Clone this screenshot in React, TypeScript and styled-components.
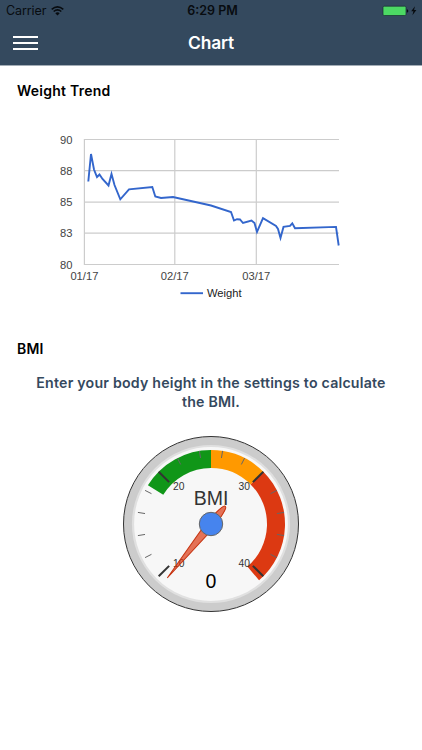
import React from "react";
import styled, { createGlobalStyle } from "styled-components";

const GlobalStyle = createGlobalStyle`
  * { box-sizing: border-box; }
  body { margin: 0; background: #fff; font-family: Inter, "Liberation Sans", sans-serif; }
`;

const Screen = styled.main`
  width: 422px;
  height: 750px;
  background: #fff;
  overflow: hidden;
`;

const Header = styled.header`
  height: 66px;
  background: #34495e;
  border-bottom: 1px solid #a3adb6;
`;

const StatusBar = styled.div`
  display: grid;
  grid-template-columns: 1fr auto 1fr;
  align-items: center;
  height: 22px;
  padding: 0 4px 0 6px;
  color: #080c10;
  font-size: 12.5px;
  line-height: 22px;
`;

const Carrier = styled.div`
  display: flex;
  align-items: center;
  gap: 4.5px;
  letter-spacing: -0.1px;
`;

const Clock = styled.div`
  font-weight: 600;
  padding-left: 1px;
`;

const Power = styled.div`
  display: flex;
  justify-content: flex-end;
`;

const NavBar = styled.nav`
  display: grid;
  grid-template-columns: 1fr auto 1fr;
  align-items: center;
  height: 42px;
  padding: 0 13px;
`;

const MenuButton = styled.button`
  display: grid;
  gap: 4px;
  width: 25px;
  padding: 0;
  border: 0;
  background: none;
`;

const MenuLine = styled.span`
  height: 2px;
  background: #fff;
`;

const Title = styled.h1`
  margin: 0;
  color: #fff;
  font-size: 17.4px;
  font-weight: 600;
  line-height: 22px;
  letter-spacing: -0.2px;
`;

const Section = styled.section<{ $height: number; $top: number }>`
  height: ${(p) => p.$height}px;
  padding-top: ${(p) => p.$top}px;
`;

const Heading = styled.h2`
  margin: 0 0 0 17px;
  font-size: 14px;
  font-weight: 600;
  line-height: 20px;
  letter-spacing: 0.24px;
  color: #000;
`;

const Notice = styled.p`
  margin: 15px 0 23px;
  text-align: center;
  color: #34495e;
  font-size: 14.2px;
  font-weight: 600;
  line-height: 18.5px;
  letter-spacing: 0.2px;
`;

const Drawing = styled.svg`
  display: block;
  font-family: "Liberation Sans", Arial, sans-serif;
`;

const TrendChart = styled(Drawing)`
  margin: 28px 0 0 50px;
`;

const Gauge = styled(Drawing)`
  margin: 0 auto;
`;

const trend =
  "88.3,181.5 91,154 94,169.5 97,177 99.5,174.5 102.5,179 108.5,185.5 111.5,174 114.5,185 120.3,199.3 129,189.3 152.3,187 155.3,196.5 161,198 173,197 211,205.5 231,212 234,220.5 237,219.2 240,219.5 243,223 251.5,220.5 254.5,223 257,232 263,218.2 276,226 278,229 280.5,238 283.5,226.9 290,225.9 292.3,223.3 295,228.2 336,226.9 338.7,245.5";

const yLabels: [string, number][] = [
  ["90", 139.5],
  ["88", 170.7],
  ["85", 202.2],
  ["83", 233.2],
  ["80", 264.5],
];

const xLabels: [string, number][] = [
  ["01/17", 84.4],
  ["02/17", 174.8],
  ["03/17", 256.3],
];

const point = (r: number, degrees: number) => {
  const a = (degrees * Math.PI) / 180;
  return `${(r * Math.sin(a)).toFixed(2)},${(-r * Math.cos(a)).toFixed(2)}`;
};

const band = (from: number, to: number) =>
  `M${point(74, from)}A74,74 0 0 1 ${point(74, to)}L${point(56, to)}A56,56 0 0 0 ${point(56, from)}Z`;

const minorTicks = [0, 1, 2].flatMap((n) => [18, 36, 54, 72].map((d) => -135 + n * 90 + d));
const majorTicks = [-135, -45, 45, 135];

export default function App() {
  return (
    <>
      <GlobalStyle />
      <Screen>
        <Header>
          <StatusBar>
            <Carrier>
              Carrier
              <svg width="13" height="10" viewBox="0 0 13 10">
                <path d="M.7 3.3Q6.5-1.6 12.3 3.3M2.7 5.5Q6.5 2.3 10.3 5.5" fill="none" stroke="#080c10" strokeWidth="1.6" />
                <path d="M4.3 7.2Q6.5 5.4 8.7 7.2L6.5 9.4Z" fill="#080c10" />
              </svg>
            </Carrier>
            <Clock>6:29 PM</Clock>
            <Power>
              <svg width="36" height="12" viewBox="382 5 36 12">
                <rect x="383" y="6.2" width="23" height="9.3" rx="1.2" fill="#4cd964" stroke="#172d31" strokeWidth=".7" />
                <path d="M406.8 9.2q1.5.2 1.5 1.7t-1.5 1.7z" fill="#080c10" />
                <path d="M414.9 6.2l-3.7 5h2.2l-1 4 4-5.2h-2.3z" fill="#080c10" />
              </svg>
            </Power>
          </StatusBar>
          <NavBar>
            <MenuButton aria-label="Menu">
              <MenuLine />
              <MenuLine />
              <MenuLine />
            </MenuButton>
            <Title>Chart</Title>
          </NavBar>
        </Header>

        <Section $height={258} $top={15}>
          <Heading>Weight Trend</Heading>
          <TrendChart width="300" height="175" viewBox="50 129 300 175">
            <g stroke="#ccc" strokeWidth="1.2">
              {yLabels.map(([label, y]) => (
                <line key={label} x1="84" x2="339" y1={y} y2={y} />
              ))}
              {xLabels.map(([label, x]) => (
                <line key={label} x1={x} x2={x} y1="139" y2="265" />
              ))}
            </g>
            <g fill="#444" fontSize="11.2">
              {yLabels.map(([label, y]) => (
                <text key={label} x="72.5" y={y + 4.2} textAnchor="end">{label}</text>
              ))}
              {xLabels.map(([label, x]) => (
                <text key={label} x={x} y="280.2" textAnchor="middle">{label}</text>
              ))}
            </g>
            <polyline points={trend} fill="none" stroke="#3366cc" strokeWidth="1.9" />
            <line x1="180.5" x2="203" y1="293.2" y2="293.2" stroke="#3366cc" strokeWidth="1.9" />
            <text x="207" y="297.3" fontSize="11.2" fill="#222">Weight</text>
          </TrendChart>
        </Section>

        <Section $height={426} $top={15}>
          <Heading>BMI</Heading>
          <Notice>
            Enter your body height in the settings to calculate
            <br />
            the BMI.
          </Notice>
          <Gauge width="180" height="180" viewBox="-90 -90 180 180">
            <circle r="87.5" fill="#ccc" stroke="#333" strokeWidth="1" />
            <circle r="78" fill="#f7f7f7" stroke="#e0e0e0" strokeWidth="2.2" />
            <path d={band(-58.5, 0)} fill="#109618" />
            <path d={band(0, 45)} fill="#ff9900" />
            <path d={band(45, 139.5)} fill="#dc3912" />
            {minorTicks.map((a) => (
              <path key={a} d={`M${point(74, a)}L${point(66.8, a)}`} stroke="#666" strokeWidth="1" />
            ))}
            {majorTicks.map((a) => (
              <path key={a} d={`M${point(74, a)}L${point(59.2, a)}`} stroke="#333" strokeWidth="2" />
            ))}
            <g fill="#333" fontSize="10.3">
              <text x="-38" y="-34">20</text>
              <text x="39" y="-34" textAnchor="end">30</text>
              <text x="-38" y="43">10</text>
              <text x="39" y="43" textAnchor="end">40</text>
            </g>
            <g textAnchor="middle">
              <text y="-19" fontSize="19.5" fill="#333">BMI</text>
              <text y="64" fontSize="19.5" fill="#000">0</text>
            </g>
            <path
              d="M0-69.5L4.3-4C3.8 8 3.4 17 1.5 21.5Q0 24-1.5 21.5C-3.4 17-3.8 8-4.3-4Z"
              transform="rotate(-141)"
              fill="#dc3912"
              fillOpacity=".7"
              stroke="#c63310"
              strokeWidth="1"
            />
            <circle r="11.7" fill="#4684ee" stroke="#666" strokeWidth="1" />
          </Gauge>
        </Section>
      </Screen>
    </>
  );
}
